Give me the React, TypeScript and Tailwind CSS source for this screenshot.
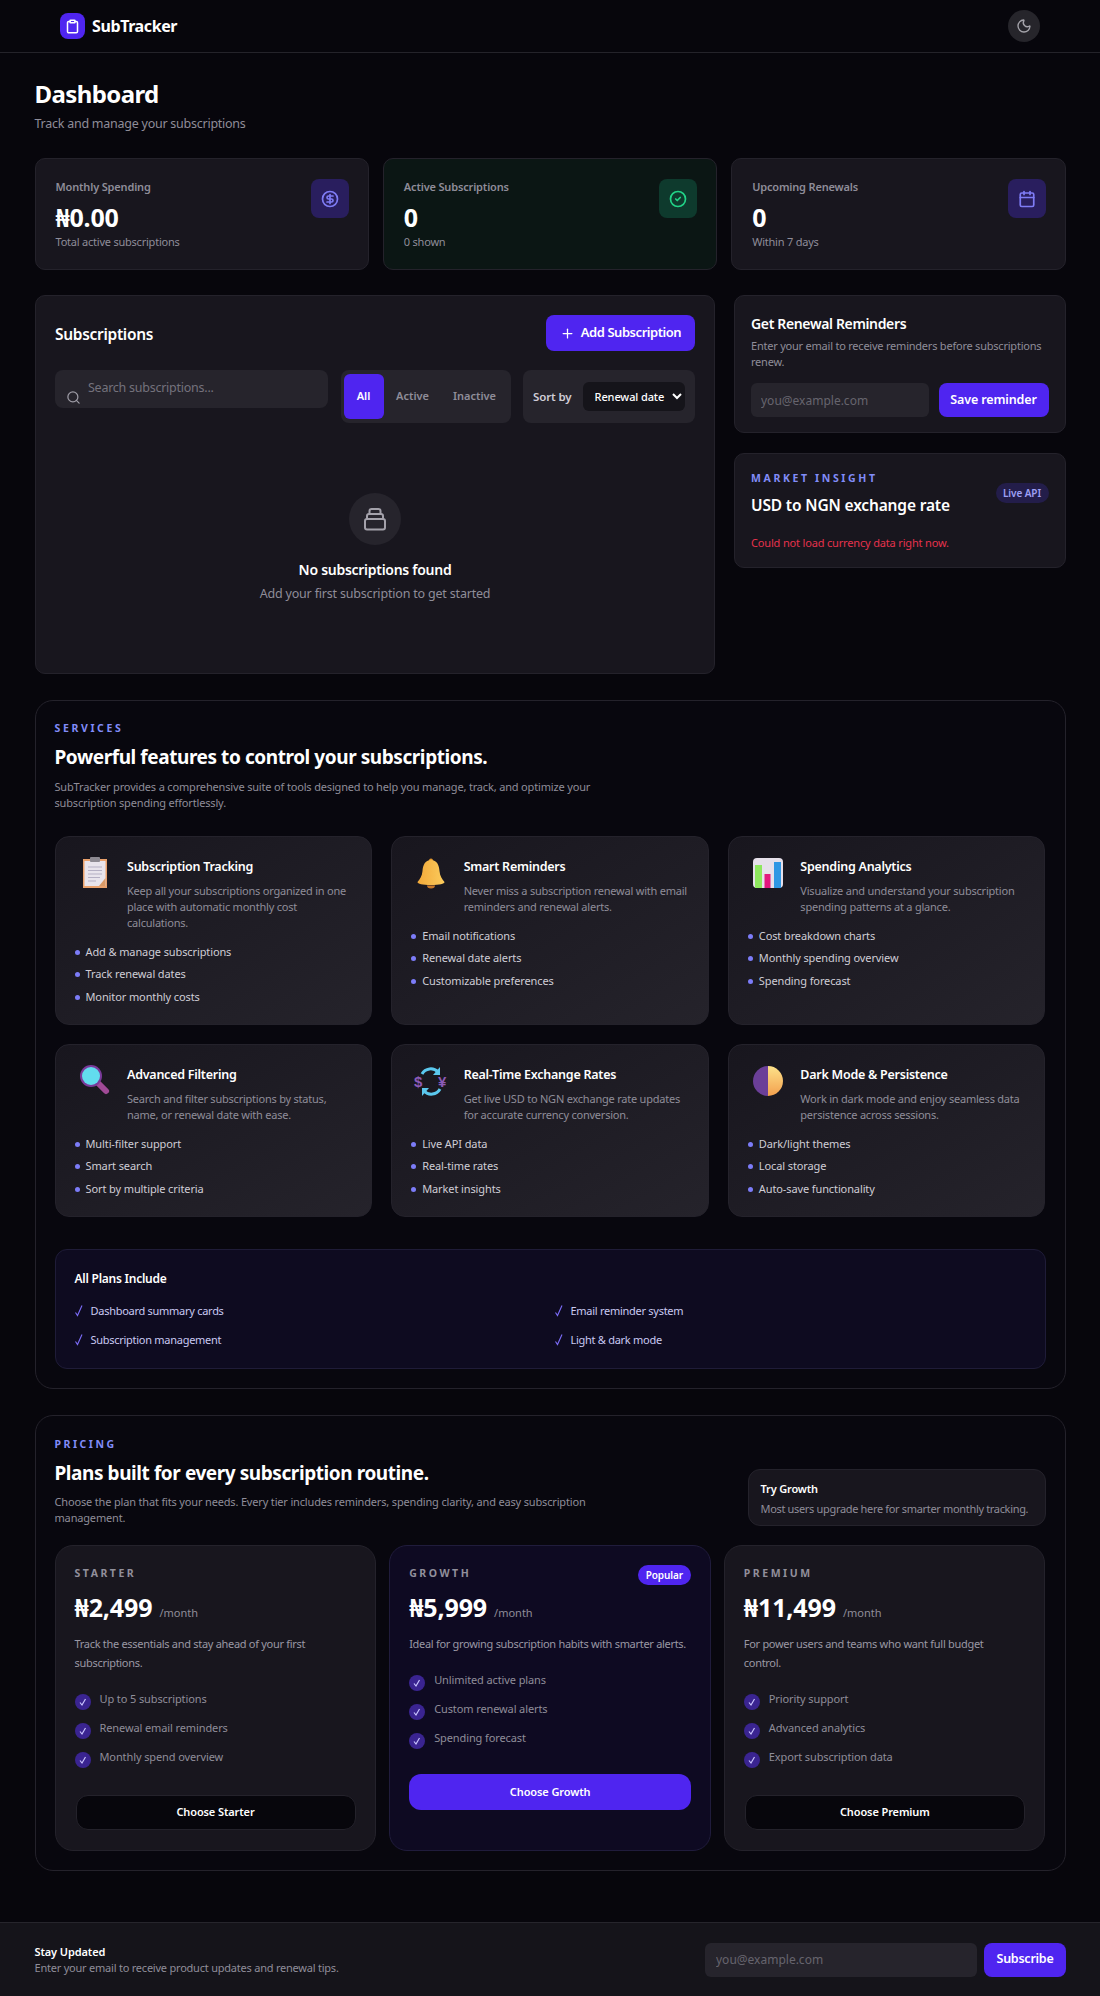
import React from "react";
import { Moon, Clipboard, CircleDollarSign, CircleCheck, Calendar, Plus, Search } from "lucide-react";

const P = "bg-[#4f25f0]";

function Doc() {
  return (
    <svg width="44" height="34" viewBox="0 0 44 34">
      <rect x="10" y="3" width="24" height="29" fill="#e9a16c" />
      <path d="M11.5 5h21v25h-21z" fill="#e8e4ec" />
      <path d="M26 30l6.500-8v8z" fill="#d99a68" />
      <rect x="17" y="1" width="10" height="5" rx="1" fill="#8d8a92" />
      <path d="M15 11h14M15 14.500h14M15 18h14M15 21.500h12M15 25h8" stroke="#b5b0c4" strokeWidth="1" />
    </svg>
  );
}
function Bell() {
  return (
    <svg width="44" height="34" viewBox="0 0 44 34">
      <defs>
        <linearGradient id="bg1" x1="0" y1="0" x2="1" y2="0">
          <stop offset="0" stopColor="#f2a93a" />
          <stop offset="1" stopColor="#fbcb5c" />
        </linearGradient>
      </defs>
      <circle cx="22" cy="4.500" r="2" fill="#e59a2e" />
      <path d="M22 4c-6 0-8 5-8.500 11-.4 5-2.500 8-5 11 0 2 5 3 13.500 3s13.500-1 13.500-3c-2.500-3-4.600-6-5-11C30 9 28 4 22 4z" fill="url(#bg1)" />
      <path d="M18 29.500a4 3 0 008 0z" fill="#c9792a" />
    </svg>
  );
}
function Chart() {
  return (
    <svg width="44" height="34" viewBox="0 0 44 34">
      <rect x="7" y="2" width="30" height="30" rx="4" fill="#e6e0ea" />
      <rect x="9" y="9" width="7" height="23" fill="#8ee85e" />
      <rect x="18.500" y="18" width="6" height="14" fill="#e4177f" />
      <rect x="28" y="6" width="7" height="26" fill="#2f97e4" />
    </svg>
  );
}
function Lens() {
  return (
    <svg width="44" height="34" viewBox="0 0 44 34">
      <path d="M26 20l7 7" stroke="#a04a96" strokeWidth="6" strokeLinecap="round" />
      <circle cx="18" cy="12" r="11" fill="#7a3a9a" />
      <circle cx="18" cy="12" r="9" fill="#62dcee" />
    </svg>
  );
}
function Exchange() {
  return (
    <svg width="44" height="34" viewBox="0 0 44 34" fill="none">
      <path d="M13 10a10 10 0 0116-2" stroke="#5bc8ee" strokeWidth="3" />
      <path d="M31 3v8h-7z" fill="#5bc8ee" />
      <path d="M31 25a10 10 0 01-16 2" stroke="#5bc8ee" strokeWidth="3" />
      <path d="M13 32v-8h7z" fill="#5bc8ee" />
      <text x="5" y="23" fill="#8c5bb8" fontSize="15" fontWeight="700" fontFamily="Liberation Sans, sans-serif">$</text>
      <text x="29" y="23" fill="#8c5bb8" fontSize="15" fontWeight="700" fontFamily="Liberation Sans, sans-serif">¥</text>
    </svg>
  );
}
function HalfMoon() {
  return (
    <svg width="44" height="34" viewBox="0 0 44 34">
      <defs>
        <linearGradient id="hm" x1="0" y1="0" x2="0" y2="1">
          <stop offset="0" stopColor="#fde28a" />
          <stop offset="1" stopColor="#f3a04e" />
        </linearGradient>
      </defs>
      <path d="M22 2a15 15 0 000 30z" fill="#6b3f98" />
      <path d="M22 2a15 15 0 010 30z" fill="url(#hm)" />
    </svg>
  );
}

function Check() {
  return (
    <svg width="16" height="16" viewBox="0 0 16 16" fill="none" className="mt-[5px] shrink-0">
      <circle cx="8" cy="8" r="8" fill="#3a2491" />
      <path d="M5 8.500l2 2.500 3.500-6" stroke="#c9c4ff" strokeWidth="1.200" />
    </svg>
  );
}

const features = [
  { icon: <Doc />, title: "Subscription Tracking", desc: "Keep all your subscriptions organized in one place with automatic monthly cost calculations.", items: ["Add & manage subscriptions", "Track renewal dates", "Monitor monthly costs"] },
  { icon: <Bell />, title: "Smart Reminders", desc: "Never miss a subscription renewal with email reminders and renewal alerts.", items: ["Email notifications", "Renewal date alerts", "Customizable preferences"] },
  { icon: <Chart />, title: "Spending Analytics", desc: "Visualize and understand your subscription spending patterns at a glance.", items: ["Cost breakdown charts", "Monthly spending overview", "Spending forecast"] },
  { icon: <Lens />, title: "Advanced Filtering", desc: "Search and filter subscriptions by status, name, or renewal date with ease.", items: ["Multi-filter support", "Smart search", "Sort by multiple criteria"] },
  { icon: <Exchange />, title: "Real-Time Exchange Rates", desc: "Get live USD to NGN exchange rate updates for accurate currency conversion.", items: ["Live API data", "Real-time rates", "Market insights"] },
  { icon: <HalfMoon />, title: "Dark Mode & Persistence", desc: "Work in dark mode and enjoy seamless data persistence across sessions.", items: ["Dark/light themes", "Local storage", "Auto-save functionality"] },
];

const plans = [
  { name: "STARTER", price: "₦2,499", desc: "Track the essentials and stay ahead of your first subscriptions.", items: ["Up to 5 subscriptions", "Renewal email reminders", "Monthly spend overview"], cta: "Choose Starter" },
  { name: "GROWTH", price: "₦5,999", desc: "Ideal for growing subscription habits with smarter alerts.", items: ["Unlimited active plans", "Custom renewal alerts", "Spending forecast"], cta: "Choose Growth", popular: true },
  { name: "PREMIUM", price: "₦11,499", desc: "For power users and teams who want full budget control.", items: ["Priority support", "Advanced analytics", "Export subscription data"], cta: "Choose Premium" },
];

function Stat({ label, value, sub, icon, green }: { label: string; value: string; sub: string; icon: React.ReactNode; green?: boolean }) {
  return (
    <div className={`h-[112px] rounded-[10px] border border-[#24222b] pl-[20px] pr-[19px] pt-[20px] flex justify-between ${green ? "bg-[#0b1614]" : "bg-[#18161e]"}`}>
      <div>
        <div className="text-[11px] leading-4 font-semibold text-[#8f8d99] tracking-[-0.015em]">{label}</div>
        <div className="mt-[6px] text-[25px] leading-8 font-bold text-white tracking-[-0.01em]">{value}</div>
        <div className="mt-[1px] text-[11px] leading-4 text-[#8f8d99] tracking-[-0.02em]">{sub}</div>
      </div>
      <div className={`w-[38px] h-[39px] rounded-lg flex items-center justify-center ${green ? "bg-[#0e3a2d] text-[#22d387]" : "bg-[#291e5e] text-[#7f7cf5]"}`}>{icon}</div>
    </div>
  );
}

export default function App() {
  return (
    <div className="min-h-[1996px] bg-[#07060c] font-['Noto_Sans',sans-serif] text-white">
      <header className="h-[53px] border-b border-[#24232a] px-[60px] flex items-center justify-between">
        <div className="flex items-center gap-[7px]">
          <div className={`w-[25px] h-[26px] rounded-lg ${P} flex items-center justify-center`}>
            <Clipboard size={15} strokeWidth={2.4} className="text-white" />
          </div>
          <span className="text-[16px] font-bold tracking-[-0.025em]">SubTracker</span>
        </div>
        <div className="w-8 h-8 rounded-full bg-[#26252b] flex items-center justify-center">
          <Moon size={16} className="text-[#a5a4ab]" />
        </div>
      </header>

      <main className="px-[34.500px] pt-[25px]">
        <h1 className="text-[24px] leading-8 font-bold tracking-[-0.025em]">Dashboard</h1>
        <p className="mt-[4px] mb-[24px] text-[12.5px] leading-5 text-[#8f8d99] tracking-[-0.02em]">Track and manage your subscriptions</p>

        <div className="grid grid-cols-3 gap-[14px]">
          <Stat label="Monthly Spending" value="₦0.00" sub="Total active subscriptions" icon={<CircleDollarSign size={18} strokeWidth={2.25} />} />
          <Stat label="Active Subscriptions" value="0" sub="0 shown" icon={<CircleCheck size={18} strokeWidth={2.25} />} green />
          <Stat label="Upcoming Renewals" value="0" sub="Within 7 days" icon={<Calendar size={18} strokeWidth={2.25} />} />
        </div>

        <div className="mt-[25px] grid grid-cols-[680px_331.500px] gap-[19.500px] items-start">
          <section className="rounded-[10px] border border-[#24222b] bg-[#18161e] pl-[19.500px] pr-[18.500px] pt-[19px] pb-[69px]">
            <div className="flex items-center justify-between h-9">
              <h2 className="mt-[3px] text-[15.5px] font-semibold tracking-[-0.02em]">Subscriptions</h2>
              <button className={`w-[149px] h-9 rounded-lg ${P} flex items-center justify-center gap-[6px] text-[13px] font-semibold tracking-[-0.035em]`}>
                <Plus size={15} />
                Add Subscription
              </button>
            </div>
            <div className="mt-[19px] flex items-start gap-[12.500px]">
              <div className="relative flex-1">
                <Search size={15} className="absolute left-[11px] top-[20px] text-[#9d9ba5]" />
                <input placeholder="Search subscriptions..." className="w-full h-[38px] rounded-lg bg-[#26242c] pl-[33px] pr-3 pb-[3px] text-[12.5px] outline-none placeholder:text-[#74727c] tracking-[-0.02em]" />
              </div>
              <div className="w-[170px] h-[53px] rounded-lg bg-[#26242c] py-[4px] pl-[3px] flex items-stretch text-[11px] font-semibold">
                <button className={`w-10 rounded-md ${P} text-white`}>All</button>
                <button className="w-[58px] text-[#8f8d99]">Active</button>
                <button className="w-[66px] text-[#8f8d99]">Inactive</button>
              </div>
              <div className="w-[172px] h-[53px] rounded-lg bg-[#26242c] pl-[10px] flex items-center gap-[11px]">
                <span className="text-[11.500px] font-semibold text-[#cfcdd6] tracking-[-0.01em]">Sort by</span>
                <select className="w-[102px] h-[29px] rounded-md bg-[#15141a] text-[11px] font-medium pl-[8px] outline-none [color-scheme:dark] tracking-[-0.01em]">
                  <option>Renewal date</option>
                </select>
              </div>
            </div>
            <div className="pt-[70px] flex flex-col items-center">
              <div className="w-[52px] h-[52px] rounded-full bg-[#26242c] flex items-center justify-center">
                <svg width="24" height="24" viewBox="0 0 24 24" fill="none" stroke="#a3a1aa" strokeWidth="2" strokeLinejoin="round">
                  <rect x="2" y="12" width="20" height="10.500" rx="2" />
                  <path d="M4 12V9a2 2 0 012-2h12a2 2 0 012 2v3" />
                  <path d="M6.500 7V4a2 2 0 012-2h7a2 2 0 012 2v3" />
                </svg>
              </div>
              <div className="mt-[14px] text-[14px] leading-[22px] font-semibold tracking-[-0.02em]">No subscriptions found</div>
              <div className="mt-[3px] text-[12.5px] leading-5 text-[#8f8d99] tracking-[-0.015em]">Add your first subscription to get started</div>
            </div>
          </section>

          <div className="flex flex-col gap-[20px]">
            <section className="h-[138px] rounded-[10px] border border-[#24222b] bg-[#18161e] px-[16px] pt-[17px]">
              <h3 className="text-[14px] leading-[22px] font-semibold tracking-[-0.025em]">Get Renewal Reminders</h3>
              <p className="mt-[3px] text-[11px] leading-4 text-[#8f8d99] tracking-[-0.02em]">Enter your email to receive reminders before subscriptions renew.</p>
              <div className="mt-[13px] flex gap-[10px]">
                <input placeholder="you@example.com" className="flex-1 min-w-0 h-[34px] rounded-md bg-[#26242c] px-[10px] text-[12px] outline-none placeholder:text-[#66646e]" />
                <button className={`w-[110px] h-[34px] rounded-lg ${P} text-[12.5px] font-semibold tracking-[-0.01em]`}>Save reminder</button>
              </div>
            </section>
            <section className="h-[115px] rounded-[10px] border border-[#24222b] bg-[#18161e] px-[16px] pt-[16px]">
              <div className="flex justify-between items-start">
                <div>
                  <div className="text-[10.5px] leading-4 font-bold tracking-[0.25em] text-[#818cf8]">MARKET INSIGHT</div>
                  <div className="mt-[7px] text-[15.5px] leading-6 font-semibold tracking-[-0.01em]">USD to NGN exchange rate</div>
                </div>
                <div className="mt-[13px] w-[53px] h-5 rounded-full bg-[#231d4a] flex items-center justify-center text-[10px] font-semibold text-[#9ea0f5] tracking-[-0.01em]">Live API</div>
              </div>
              <div className="mt-[18px] text-[11px] leading-4 text-[#e5324d] tracking-[-0.015em]">Could not load currency data right now.</div>
            </section>
          </div>
        </div>

        <section className="mt-[26px] rounded-[18px] border border-[#24222b] bg-[#08070e] px-[19px] pt-[19px] pb-[19px]">
          <div className="text-[10.5px] leading-4 font-bold tracking-[0.25em] text-[#818cf8]">SERVICES</div>
          <h2 className="mt-[7px] text-[19px] leading-7 font-bold tracking-[-0.0225em]">Powerful features to control your subscriptions.</h2>
          <p className="mt-[8px] mb-[25px] max-w-[560px] text-[11px] leading-4 text-[#8f8d99] tracking-[-0.015em]">SubTracker provides a comprehensive suite of tools designed to help you manage, track, and optimize your subscription spending effortlessly.</p>
          <div className="grid grid-cols-3 gap-[19px]">
            {features.map((f) => (
              <div key={f.title} className="rounded-[14px] border border-[#24222b] bg-gradient-to-br from-[#18161e] to-[#25232b] pl-[19px] pr-[17px] pt-[20px] pb-[15.750px]">
                <div className="flex">
                  <div className="w-[54.500px] shrink-0 h-[34px] -ml-[2px] -mt-[1px]">{f.icon}</div>
                  <div className="flex-1">
                    <div className="text-[12.5px] leading-5 font-semibold tracking-[-0.02em]">{f.title}</div>
                    <div className="mt-[6px] text-[11px] leading-4 text-[#8f8d99] tracking-[-0.02em]">{f.desc}</div>
                  </div>
                </div>
                <ul className="mt-[9.750px]">
                  {f.items.map((it) => (
                    <li key={it} className="h-[22.500px] flex items-center gap-[6px] text-[11px] text-[#cfcdd6] tracking-[-0.01em]">
                      <span className="w-[5px] h-[5px] rounded-full bg-[#7c7cf8]" />
                      {it}
                    </li>
                  ))}
                </ul>
              </div>
            ))}
          </div>
          <div className="mt-[32px] h-[120px] rounded-[12px] border border-[#1f1c38] bg-[#0e0b20] px-[19px] pt-[19px]">
            <div className="text-[12px] leading-5 font-semibold tracking-[-0.02em]">All Plans Include</div>
            <div className="mt-[12px] grid grid-cols-2 gap-x-[9px] gap-y-[9px]">
              {["Dashboard summary cards", "Email reminder system", "Subscription management", "Light & dark mode"].map((t) => (
                <div key={t} className="flex items-center h-5 gap-[8px] text-[11px] text-[#c9c9f2] tracking-[-0.025em]">
                  <svg width="8" height="14" viewBox="0 0 8 14" fill="none"><path d="M0.500 8.500l2 3L7 1.500" stroke="#7c6cf8" strokeWidth="1.100" /></svg>
                  {t}
                </div>
              ))}
            </div>
          </div>
        </section>

        <section className="mt-[26px] rounded-[18px] border border-[#24222b] bg-[#08070e] px-[19px] pt-[20px] pb-[19px]">
          <div className="flex justify-between items-end">
            <div>
              <div className="text-[10.5px] leading-4 font-bold tracking-[0.24em] text-[#818cf8]">PRICING</div>
              <h2 className="mt-[7px] text-[19px] leading-7 font-bold tracking-[-0.0225em]">Plans built for every subscription routine.</h2>
              <p className="mt-[7px] max-w-[540px] text-[11px] leading-4 text-[#8f8d99] tracking-[-0.015em]">Choose the plan that fits your needs. Every tier includes reminders, spending clarity, and easy subscription management.</p>
            </div>
            <div className="w-[298px] h-[57px] rounded-[12px] border border-[#24222b] bg-[#18161e] pl-[12px] pt-[9px]">
              <div className="text-[11px] leading-5 font-semibold tracking-[-0.015em]">Try Growth</div>
              <div className="text-[11px] leading-5 text-[#8f8d99] tracking-[-0.03em] whitespace-nowrap">Most users upgrade here for smarter monthly tracking.</div>
            </div>
          </div>
          <div className="mt-[19px] grid grid-cols-3 gap-[13px]">
            {plans.map((p) => (
              <div key={p.name} className={`relative rounded-[18px] border h-[306px] pl-[19px] pr-[18px] pt-[19px] ${p.popular ? "border-[#201c3c] bg-[#0e0a22]" : "border-[#24222b] bg-[#18161e]"}`}>
                {p.popular && (
                  <div className={`absolute top-[19px] right-[19px] w-[53px] h-5 rounded-full ${P} flex items-center justify-center text-[10px] font-semibold tracking-[-0.01em]`}>Popular</div>
                )}
                <div className="text-[10.5px] leading-4 font-bold tracking-[0.24em] text-[#918f9b]">{p.name}</div>
                <div className="mt-[10px] flex items-baseline gap-[7px]">
                  <span className="text-[25px] leading-8 font-bold tracking-[-0.005em]">{p.price}</span>
                  <span className="text-[11px] text-[#8f8d99]">/month</span>
                </div>
                <p className={`mt-[10.500px] text-[11px] leading-[19px] text-[#9a98a4] tracking-[-0.027em] ${p.popular ? "" : "max-w-[270px]"}`}>{p.desc}</p>
                <ul className="mt-[17.500px] flex flex-col gap-[9px]">
                  {p.items.map((it) => (
                    <li key={it} className="flex gap-[9px] h-5 items-start">
                      <Check />
                      <span className="text-[11px] leading-5 text-[#8f8d99] tracking-[-0.01em]">{it}</span>
                    </li>
                  ))}
                </ul>
                {p.popular ? (
                  <button className={`mt-[26px] w-[282px] h-9 rounded-[12px] ${P} text-[11px] font-semibold tracking-[-0.01em]`}>{p.cta}</button>
                ) : (
                  <button className="mt-[28px] mx-[1px] w-[280px] h-[35px] rounded-[12px] border border-[#24222b] bg-[#07060c] text-[11px] font-semibold tracking-[-0.01em]">{p.cta}</button>
                )}
              </div>
            ))}
          </div>
        </section>
      </main>

      <footer className="mt-[51px] h-[74px] border-t border-[#26252c] bg-[#15141a] pl-[34.500px] pr-[34px] flex items-center justify-between">
        <div>
          <div className="text-[11px] leading-4 font-semibold tracking-[-0.01em]">Stay Updated</div>
          <div className="text-[11px] leading-4 text-[#8f8d99] tracking-[-0.02em]">Enter your email to receive product updates and renewal tips.</div>
        </div>
        <div className="flex gap-[7px]">
          <input placeholder="you@example.com" className="w-[272px] h-[34px] rounded-md bg-[#26242c] px-[11px] text-[12px] outline-none placeholder:text-[#66646e]" />
          <button className={`w-[82px] h-[34px] rounded-lg ${P} text-[12.5px] font-semibold tracking-[-0.02em]`}>Subscribe</button>
        </div>
      </footer>
    </div>
  );
}
